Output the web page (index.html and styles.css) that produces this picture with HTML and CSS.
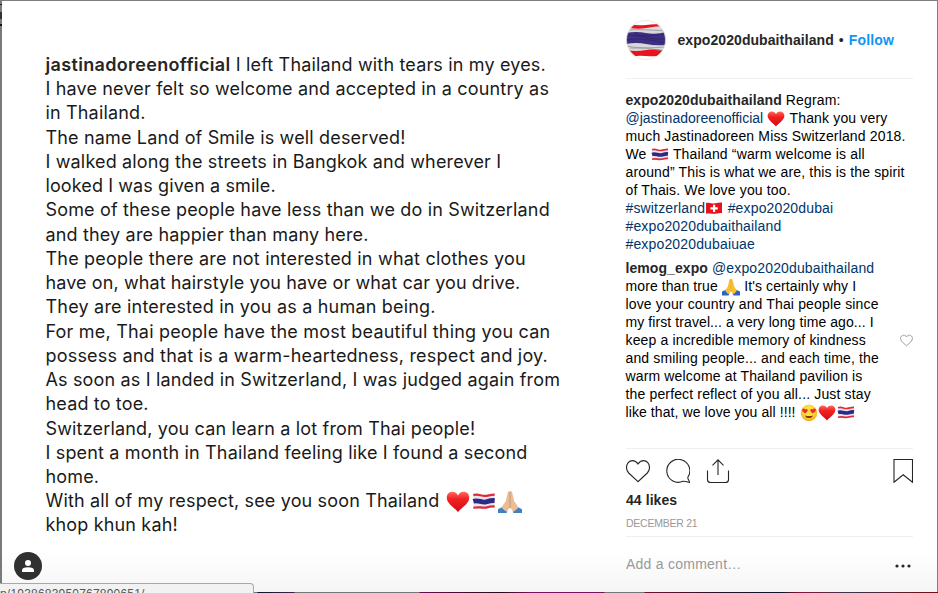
FILE: index.html
```
<!DOCTYPE html>
<html lang="en">
<head>
    <meta charset="UTF-8">
    <meta name="viewport" content="width=device-width, initial-scale=1.0">
    <title>expo2020dubaithailand</title>
    <link rel="stylesheet" href="styles.css">
</head>
<body>
    <!-- emoji shapes -->
    <svg class="defs">
        <defs>
            <linearGradient id="red" x1="0" y1="0" x2="0" y2="1">
                <stop offset="0" stop-color="#ff6a5c"/>
                <stop offset="0.35" stop-color="#f32222"/>
                <stop offset="1" stop-color="#cf0a14"/>
            </linearGradient>
            <radialGradient id="face" cx="0.5" cy="0.4" r="0.6">
                <stop offset="0.5" stop-color="#ffdf3a"/>
                <stop offset="1" stop-color="#f3a51b"/>
            </radialGradient>
            <symbol id="e-heart" viewBox="0 0 18 18">
                <path fill="url(#red)" d="M9 16.6C7.5 14 .6 10.600.6 5.800C.6 3 2.500 1.400 4.800 1.400C6.700 1.400 8.300 2.500 9 4.100C9.700 2.500 11.300 1.400 13.200 1.400C15.500 1.400 17.400 3 17.400 5.800C17.400 10.600 10.500 14 9 16.600Z"/>
            </symbol>
            <symbol id="e-thai" viewBox="0 0 18 18">
                <path fill="#e9e6ea" d="M1 3.200C5 1.600 7 4.500 10.500 3.800C13 3.300 15 2.700 17 2.700V13C13 12.400 11 14.400 7.500 14C5 13.700 3 13.400 1 14Z"/>
                <path fill="none" stroke="#dc2b3c" stroke-width="1.700" d="M1 3.800C5 2.300 7 5.100 10.500 4.400C13 3.900 15 3.400 17 3.400M1 13.300C5 12.300 7 13.700 10.500 13.200C13 12.500 15 12 17 12.400"/>
                <path fill="none" stroke="#2a2a86" stroke-width="3.600" d="M1 8.400C5 7.200 7 9.700 10.500 8.900C13 8.200 15 7.700 17 7.900"/>
            </symbol>
            <symbol id="e-swiss" viewBox="0 0 18 18">
                <path fill="#e8121c" d="M1 3C5 1.800 7 4 10.500 3.300C13 2.800 15 2.300 17 2.500V13C13 12.500 11 14.200 7.500 13.800C5 13.400 3 13.200 1 13.700Z"/>
                <path fill="#fff" d="M8 4.700h2.200v2.500h2.600v2.200h-2.600v2.500H8v-2.500H5.400V7.200H8Z"/>
            </symbol>
            <symbol id="e-hands" viewBox="0 0 18 18">
                <path fill="#2c62c8" d="M0 13.500L4.500 11.500L7.500 15.500L6.500 17.500H0ZM18 13.500L13.500 11.500L10.500 15.500L11.500 17.500H18Z"/>
                <path fill="#fbc02b" d="M8.800 .8C7.600 .6 7.300 1.800 7 3.400L5.800 8.500L3.200 12.700L6.200 16.300L8.800 13.500ZM9.200 .8C10.400 .6 10.700 1.800 11 3.400L12.200 8.500L14.800 12.700L11.800 16.300L9.200 13.500Z"/>
                <path stroke="#c98a14" stroke-width=".6" d="M9 1.500V13.500"/>
            </symbol>
            <symbol id="e-pray" viewBox="0 0 18 18">
                <path fill="#3f7fc4" d="M0 14.500L3.500 12.500L7 15.500L6.500 17.300H0ZM18 14.500L14.500 12.500L11 15.500L11.500 17.300H18Z"/>
                <path fill="#ecbd95" d="M8.800 .8C7.600 .6 7.300 1.800 7 3.400L5.800 8.500L2.500 13.200L6.200 16.300L8.800 13.500ZM9.200 .8C10.400 .6 10.700 1.800 11 3.400L12.200 8.500L15.500 13.200L11.800 16.300L9.200 13.500Z"/>
                <path stroke="#a9764f" stroke-width=".6" d="M9 1.500V13.500"/>
            </symbol>
            <symbol id="e-love" viewBox="0 0 18 18">
                <circle cx="9" cy="9" r="8.200" fill="url(#face)"/>
                <path fill="#ee2a3a" d="M5.400 9.400C4.200 8.700 1.900 7.600 2.100 5.700C2.500 4.200 4.500 4.200 5.100 5.400C6 4.400 7.700 4.900 7.700 6.300C7.600 7.700 6.200 8.500 5.400 9.400ZM12.600 9.400C13.800 8.700 16.100 7.600 15.900 5.700C15.500 4.200 13.500 4.200 12.900 5.400C12 4.400 10.300 4.900 10.300 6.300C10.400 7.700 11.800 8.500 12.600 9.400Z"/>
                <path fill="#7a3a12" d="M5.200 11.400C7.500 12.200 10.500 12.200 12.800 11.400C12.400 15 5.600 15 5.200 11.400Z"/>
            </symbol>
        </defs>
    </svg>

    <div class="dialog">
        <div class="photo">
            <div class="quote">
                <p><b>jastinadoreenofficial</b> I left Thailand with tears in my eyes.</p>
                <p>I have never felt so welcome and accepted in a country as</p>
                <p>in Thailand.</p>
                <p>The name Land of Smile is well deserved!</p>
                <p>I walked along the streets in Bangkok and wherever I</p>
                <p class="tight">looked I was given a smile.</p>
                <p>Some of these people have less than we do in Switzerland</p>
                <p>and they are happier than many here.</p>
                <p class="wide">The people there are not interested in what clothes you</p>
                <p class="tight">have on, what hairstyle you have or what car you drive.</p>
                <p class="wide">They are interested in you as a human being.</p>
                <p class="wide">For me, Thai people have the most beautiful thing you can</p>
                <p class="wide">possess and that is a warm-heartedness, respect and joy.</p>
                <p>As soon as I landed in Switzerland, I was judged again from</p>
                <p>head to toe.</p>
                <p>Switzerland, you can learn a lot from Thai people!</p>
                <p>I spent a month in Thailand feeling like I found a second</p>
                <p>home.</p>
                <p>With all of my respect, see you soon Thailand <svg class="big"><use href="#e-heart"/></svg><svg class="big flag"><use href="#e-thai"/></svg><svg class="big"><use href="#e-pray"/></svg></p>
                <p>khop khun kah!</p>
            </div>
            <div class="tag">
                <svg width="12" height="12" viewBox="0 0 12 12" fill="#fff"><circle cx="6" cy="3" r="3"/><path d="M0 12V10.500C0 8.200 2 7.200 6 7.200S12 8.200 12 10.500V12Z"/></svg>
            </div>
        </div>

        <div class="side">
            <div class="header">
                <svg class="avatar" viewBox="0 0 40 40">
                    <clipPath id="round"><circle cx="20" cy="20" r="19.500"/></clipPath>
                    <g clip-path="url(#round)">
                        <path fill="#fff" d="M0 0H40V40H0Z"/>
                        <path fill="#d9d9dc" d="M0 6H40V32H0Z"/>
                        <path fill="#e8131c" d="M3 4Q10 6 20 5T36 4L40 6Q30 6 20 8T0 7ZM0 30Q10 32 20 30T40 31V35Q30 37 20 36T8 37L0 34Z"/>
                        <path fill="#3f2f83" d="M0 13Q10 11 20 13T40 12V25Q30 26 20 24T0 24Z"/>
                        <path fill="none" stroke="#1d1848" stroke-width=".6" opacity=".6" d="M0 15Q18 17 40 14M0 20Q14 17 40 23M8 13Q20 20 40 19"/>
                        <path fill="none" stroke="#8d8d94" stroke-width=".7" d="M0 10Q14 9 40 11M0 26Q14 29 40 27M4 28Q20 27 38 31"/>
                    </g>
                    <circle cx="20" cy="20" r="19.500" fill="none" stroke="#dedede" stroke-width=".7"/>
                </svg>
                <b class="name">expo2020dubaithailand</b>
                <span class="dot">•</span>
                <b class="follow">Follow</b>
            </div>

            <div class="comments">
                <div class="comment">
                    <p><b>expo2020dubaithailand</b> Regram:</p>
                    <p><a class="plain">@jastinadoreenofficial</a> <svg class="emo"><use href="#e-heart"/></svg> Thank you very</p>
                    <p>much Jastinadoreen Miss Switzerland 2018.</p>
                    <p>We <svg class="emo"><use href="#e-thai"/></svg> Thailand “warm welcome is all</p>
                    <p>around” This is what we are, this is the spirit</p>
                    <p>of Thais. We love you too.</p>
                    <p><a>#switzerland<svg class="emo"><use href="#e-swiss"/></svg></a> <a>#expo2020dubai</a></p>
                    <p><a>#expo2020dubaithailand</a></p>
                    <p><a>#expo2020dubaiuae</a></p>
                </div>
                <div class="comment reply">
                    <div>
                        <p><b>lemog_expo</b> <a>@expo2020dubaithailand</a></p>
                        <p class="snug">more than true <svg class="emo"><use href="#e-hands"/></svg> It's certainly why I</p>
                        <p>love your country and Thai people since</p>
                        <p class="snug">my first travel... a very long time ago... I</p>
                        <p>keep a incredible memory of kindness</p>
                        <p>and smiling people... and each time, the</p>
                        <p>warm welcome at Thailand pavilion is</p>
                        <p>the perfect reflect of you all... Just stay</p>
                        <p class="snug">like that, we love you all !!!! <svg class="emo"><use href="#e-love"/></svg><svg class="emo"><use href="#e-heart"/></svg><svg class="emo"><use href="#e-thai"/></svg></p>
                    </div>
                    <svg class="like" viewBox="0 0 24 24"><path d="M12 21.800C10 19 1 14.500 1 8.200C1 4.600 3.700 2.200 6.800 2.200C9.200 2.200 11.100 3.600 12 5.600C12.900 3.600 14.800 2.200 17.200 2.200C20.300 2.200 23 4.600 23 8.200C23 14.500 14 19 12 21.800Z"/></svg>
                </div>
            </div>

            <div class="actions">
                <svg viewBox="0 0 24 24"><path d="M12 22.700L2.700 14C1.200 12.500 .5 10.800 .5 8.500C.5 4.600 3 1.600 6.500 1.600C9 1.600 10.500 2.700 12 5C13.500 2.700 15 1.600 17.500 1.600C21 1.600 23.500 4.600 23.500 8.500C23.500 10.800 22.800 12.500 21.300 14Z"/></svg>
                <svg viewBox="0 0 24 24"><path d="M21.800 18.300A11.500 11.500 0 1 0 17 22.300C19 21.800 21.500 23.300 23.500 23.400C23.500 21.800 21.700 20.500 21.800 18.300"/></svg>
                <svg viewBox="0 0 24 24"><path d="M1.500 11.500V20.500Q1.500 23.500 4.500 23.500H19.500Q22.500 23.500 22.500 20.500V11.500M12 16V.8M6.500 6.300L12 .8L17.500 6.300"/></svg>
                <svg class="save" viewBox="0 0 24 24"><path d="M5 .5H23.500V23.300L14.200 15.800L5 23.300Z"/></svg>
            </div>
            <b class="likes">44 likes</b>
            <div class="date">DECEMBER 21</div>
            <div class="add">
                <span>Add a comment…</span>
                <svg width="18" height="4" fill="#262626"><circle cx="2" cy="2" r="1.600"/><circle cx="8" cy="2" r="1.600"/><circle cx="14" cy="2" r="1.600"/></svg>
            </div>
        </div>
    </div>
    <div class="status"><span>p/1938683950767890651/</span></div>
</body>
</html>
```
FILE: styles.css
```
*{
    box-sizing: border-box;
}
body{
    margin: 0;
    width: 938px;
    height: 593px;
    overflow: hidden;
    padding: 1px 1px 1px 2px;
    background:
        linear-gradient(90deg, #777 0, #777 257px, #101030 258px, #40204a 294px, #777 295px, #777 419px, #6b0b50 420px, #250918 500px, #7c0d5c 530px, #7c0d5c 604px, #777 605px, #777 644px, #7a0d2e 645px, #201028 720px, #10102c 780px, #8c0f34 800px, #34344c 850px, #7c0a14 937px) 0 100% / 100% 1px no-repeat,
        linear-gradient(#7a7a7a 4px, #222 4px, #222 5px, #7a7a7a 5px, #7a7a7a 12px, #333 12px, #333 19px, #7a7a7a 19px, #7a7a7a 24px, #111 24px, #111 26px, #7a7a7a 26px) 0 0 / 2px 100% no-repeat,
        #7f7f7f;
    font-family: "Liberation Sans", Arial, sans-serif;
    font-size: 14px;
    line-height: 18px;
    color: #000;
}
p{
    margin: 0;
    white-space: nowrap;
}
.defs{
    position: absolute;
    width: 0;
    height: 0;
}
.dialog{
    display: flex;
    width: 935px;
    height: 591px;
    background: linear-gradient(#fff 0, #fff 550px, #f5f5f5 591px);
}
.photo{
    display: flex;
    flex-direction: column;
    justify-content: space-between;
    width: 600px;
    padding: 52px 0 12px 12px;
}
.quote{
    padding-left: 31.5px;
    font-family: Inter, sans-serif;
    font-size: 18px;
    line-height: 24.23px;
    letter-spacing: .16px;
    color: #1a1a1a;
}
.quote b{
    font-weight: 600;
    letter-spacing: .34px;
}
.quote .wide{
    letter-spacing: .2px;
}
.quote .tight{
    letter-spacing: .1px;
}
.big{
    width: 26px;
    height: 24px;
    margin: -4px 0;
    vertical-align: -3px;
}
.tag{
    display: flex;
    align-items: center;
    justify-content: center;
    width: 28px;
    height: 28px;
    border-radius: 50%;
    background: #303030;
}
.side{
    display: flex;
    flex-direction: column;
    width: 311px;
    padding: 0 0 0 24px;
}
.header{
    display: flex;
    align-items: center;
    height: 78px;
    border-bottom: 1px solid #efefef;
    color: #262626;
}
.header b{
    letter-spacing: .07px;
}
.avatar{
    width: 40px;
    height: 40px;
    margin-right: 11.500px;
}
.dot{
    margin: 0 5px;
}
.header .follow{
    color: #0f95f6;
    letter-spacing: .17px;
}
b{
    color: #262626;
}
a{
    color: #003569;
}
.comments{
    height: 369px;
    padding-top: 12px;
    letter-spacing: .15px;
}
.comments b{
    letter-spacing: .07px;
}
.comments .plain{
    letter-spacing: 0;
}
.comments .snug{
    letter-spacing: .09px;
}
.comment{
    margin-bottom: 6px;
}
.comment p{
    margin-left: -.5px;
    margin-right: .5px;
}
.reply{
    display: flex;
    justify-content: space-between;
    align-items: center;
}
.emo{
    width: 18px;
    height: 18px;
    margin: -2px .5px -2px 0;
    vertical-align: -3px;
}
.like{
    width: 13px;
    height: 13px;
    fill: none;
    stroke: #999;
    stroke-width: 1.8;
}
.actions{
    display: flex;
    gap: 16px;
    padding-top: 10px;
    border-top: 1px solid #efefef;
}
.actions svg{
    width: 24px;
    height: 24px;
    fill: none;
    stroke: #262626;
    stroke-width: 1.1;
}
.actions .save{
    margin-left: auto;
}
.likes{
    margin-top: 8px;
    letter-spacing: .07px;
}
.date{
    height: 27px;
    padding-top: 5px;
    font-size: 10.5px;
    letter-spacing: -.25px;
    color: #999;
}
.add{
    display: flex;
    align-items: center;
    justify-content: space-between;
    height: 55px;
    border-top: 1px solid #efefef;
    letter-spacing: .25px;
    color: #999;
}
.add svg{
    margin-top: 3px;
}
.status{
    position: absolute;
    left: 0;
    bottom: 0;
    width: 254px;
    height: 10px;
    overflow: hidden;
    border: 1px solid #a8a8a8;
    border-width: 1px 1px 0 0;
    border-radius: 0 4px 0 0;
    background: #f2f2f2;
    font-size: 12px;
    line-height: 20px;
    letter-spacing: .2px;
    color: #555;
}
```
